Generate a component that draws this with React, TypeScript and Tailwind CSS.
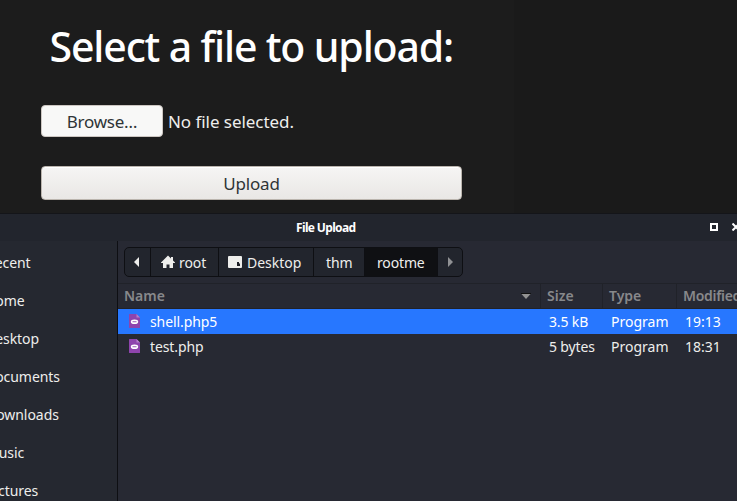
import type { ReactNode } from "react";

const places = [
  { name: "Recent", shift: "-ml-[14px]" },
  { name: "Home", shift: "-ml-[15px]" },
  { name: "Desktop", shift: "-ml-[15px]" },
  { name: "Documents", shift: "-ml-[15px]" },
  { name: "Downloads", shift: "-ml-[14px]" },
  { name: "Music", shift: "-ml-[14px]" },
  { name: "Pictures", shift: "-ml-[14px]" },
];

const files = [
  { name: "shell.php5", size: "3.5 kB", type: "Program", modified: "19:13", selected: true },
  { name: "test.php", size: "5 bytes", type: "Program", modified: "18:31", selected: false },
];

function Crumb({ className, children }: { className: string; children?: ReactNode }) {
  return (
    <div className={`flex h-full shrink-0 items-center border-r border-[#0e0f13] ${className}`}>
      {children}
    </div>
  );
}

function HomeIcon() {
  return (
    <svg width="14" height="14" viewBox="0 0 14 14" className="mr-[4px] shrink-0" fill="#eeeeec">
      <path d="M7 .5 0 7.500V8h2v5h3.500V9.500h3V13H12V8h2v-.5L12 5.500V2h-2v1.500Z" />
    </svg>
  );
}

function DesktopIcon() {
  return (
    <svg width="14" height="12" viewBox="0 0 14 12" className="mr-[5px] shrink-0">
      <rect width="14" height="12" rx="1" fill="#eeeeec" />
      <path d="M9 6h2v1.500h1V10H9Z" fill="#1c1e25" />
    </svg>
  );
}

function PhpIcon() {
  return (
    <svg width="11" height="14" viewBox="0 0 11 14" className="-mt-px shrink-0">
      <path d="M.5 0H7.500L11 3.500V13.500a.5.5 0 0 1-.5.5H.5a.5.5 0 0 1-.5-.5V.5a.5.5 0 0 1 .5-.5Z" fill="#8e44ad" />
      <path d="M7.500 0 11 3.500H7.500Z" fill="#b57fca" />
      <ellipse cx="5.500" cy="7.700" rx="3.700" ry="2.300" fill="#fff" />
      <path d="M3.500 7.700h4" stroke="#a86cc0" strokeWidth="1.100" />
    </svg>
  );
}

export default function App() {
  return (
    <div className="flex h-[501px] w-[737px] flex-col overflow-hidden bg-[#1c1c1c] font-['Noto_Sans',sans-serif] whitespace-nowrap">
      <div className="flex h-[213px] shrink-0">
        <div className="h-full w-[514px] bg-[#1c1c1c] pl-[41px]">
          <h1 className="h-[105px] pt-[16px] pl-[8.5px] text-[41px] leading-[60px] font-medium tracking-[-1.14px] text-white">
            Select a file to upload:
          </h1>
          <div className="flex h-8 items-center">
            <button className="h-8 w-[122px] rounded-[4px] border border-[#cdc7c2] bg-[#f8f8f7] text-[17px] leading-none tracking-[-0.25px] text-[#2e3436]">
              Browse…
            </button>
            <span className="mt-px ml-[5px] text-[17px] tracking-[-0.05px] text-[#eeeeec]">No file selected.</span>
          </div>
          <button className="mt-[29px] h-[34px] w-[421px] rounded-[4px] border border-[#bbb5ae] bg-linear-to-b from-[#f6f5f4] to-[#e9e7e5] text-[17px] leading-none tracking-[-0.15px] text-[#2e3436] shadow-[inset_0_1px_#fff]">
            Upload
          </button>
        </div>
        <div className="h-full grow bg-[#1a1a1a]" />
      </div>

      <div className="flex grow flex-col border-t border-[#141519] bg-[#272933] text-[14px] text-[#eeeeec]">
        <header className="flex h-[27px] shrink-0 items-center bg-[#22252d]">
          <div className="w-[296px]" />
          <span className="text-[12px] font-bold tracking-[-0.65px] text-white">File Upload</span>
          <div className="-mt-px ml-auto flex items-center gap-[14px]">
            <div className="h-2 w-2 border-2 border-white" />
            <svg width="5" height="8" viewBox="0 0 5 8" fill="none" stroke="#fff" strokeWidth="2">
              <path d="m.500.500 7 7M.500 7.500l7-7" />
            </svg>
          </div>
        </header>

        <div className="flex min-h-0 grow">
          <aside className="w-[118px] shrink-0 overflow-hidden border-r border-[#0e0f13] bg-[#252830] pt-[2px]">
            {places.map((p) => (
              <div key={p.name} className={`flex h-[38px] items-center tracking-[-0.05px] ${p.shift}`}>
                {p.name}
              </div>
            ))}
          </aside>

          <main className="min-w-0 grow">
            <div className="h-[42px] pt-[6px] pl-[6px]">
              <nav className="flex h-[30px] w-[339px] overflow-hidden rounded-[5px] border border-[#0e0f13] bg-[#22252d]">
                <Crumb className="w-[26px] pl-[9px]">
                  <svg width="5" height="10" viewBox="0 0 5 10" fill="#eeeeec"><path d="M5 0v10L0 5Z" /></svg>
                </Crumb>
                <Crumb className="w-[68px] pl-[10px] tracking-[-0.1px]"><HomeIcon />root</Crumb>
                <Crumb className="w-[95px] pl-[9px]"><DesktopIcon />Desktop</Crumb>
                <Crumb className="w-[51px] pl-[12px] tracking-[-0.1px]">thm</Crumb>
                <Crumb className="w-[73px] bg-[#0f1013] pl-[12px] tracking-[-0.15px]">rootme</Crumb>
                <div className="flex items-center pl-[10px]">
                  <svg width="5" height="10" viewBox="0 0 5 10" fill="#909194"><path d="M0 0v10l5-5Z" /></svg>
                </div>
              </nav>
            </div>

            <div className="flex h-[26px] items-center border-y border-[#202229] text-[14px] font-semibold text-[#87888b]">
              <div className="flex h-full w-[423px] shrink-0 items-center border-r border-[#202229] pb-px pr-[9px] pl-[6px]">
                Name
                <svg width="10" height="6" viewBox="0 0 10 6" className="mt-px ml-auto">
                  <path d="M0 .500h10L5 6Z" fill="#929292" /><path d="M0 .500h10" stroke="#111" />
                </svg>
              </div>
              <div className="flex h-full w-[62px] shrink-0 items-center border-r border-[#202229] pb-px pl-[6px]">Size</div>
              <div className="flex h-full w-[74px] shrink-0 items-center border-r border-[#202229] pb-px pl-[6px]">Type</div>
              <div className="pb-px pl-[6px] tracking-[-0.3px]">Modified</div>
            </div>

            {files.map((f) => (
              <div
                key={f.name}
                className={f.selected ? "flex h-[25px] items-center bg-[#2777ff] text-white" : "flex h-[25px] items-center"}
              >
                <div className="flex w-[431px] shrink-0 items-center gap-[10.500px] pl-[10.5px] tracking-[-0.1px]">
                  <PhpIcon />
                  {f.name}
                </div>
                <span className="w-[62px] shrink-0 tracking-[-0.15px]">{f.size}</span>
                <span className="w-[74px] shrink-0">{f.type}</span>
                <span>{f.modified}</span>
              </div>
            ))}
          </main>
        </div>
      </div>
    </div>
  );
}
